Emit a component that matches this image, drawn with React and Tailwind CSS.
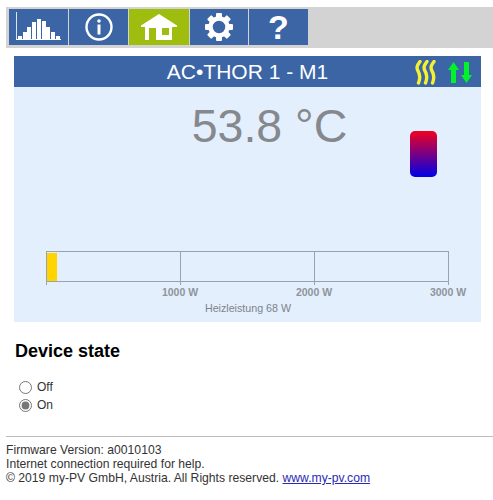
import { useState } from "react";

const font = { fontFamily: '"Liberation Sans", Arial, sans-serif' };

function ChartIcon() {
  const bars = [
    [9, 3], [14, 7], [18, 12], [23, 17], [28, 20],
    [33, 18], [37, 12], [42, 7], [47, 3],
  ];
  return (
    <svg width="59" height="36" viewBox="0 0 59 36">
      <path d="M7.5 3V31" stroke="#dbe6f2" strokeWidth="1" fill="none" />
      <rect x="7" y="30" width="45" height="1" fill="#ffffff" />
      {bars.map(([x, h]) => (
        <rect key={x} x={x} y={30 - h} width="4" height={h} fill="#ffffff" />
      ))}
    </svg>
  );
}

function InfoIcon() {
  return (
    <svg width="30" height="30" viewBox="0 0 30 30">
      <circle cx="15" cy="15" r="12.5" fill="none" stroke="#ffffff" strokeWidth="2.4" />
      <circle cx="15" cy="9" r="1.8" fill="#ffffff" />
      <rect x="13.5" y="12.5" width="3" height="10" fill="#ffffff" />
    </svg>
  );
}

function HomeIcon() {
  return (
    <svg width="36" height="26" viewBox="0 0 36 26">
      <path d="M18 0L36 11.5V13H0V11.5Z" fill="#ffffff" />
      <path fillRule="evenodd" d="M4 12H31V26H4ZM8 14V26H15V14ZM21 14V21H28V14Z" fill="#ffffff" />
    </svg>
  );
}

function GearIcon() {
  const teeth = [0, 45, 90, 135, 180, 225, 270, 315];
  return (
    <svg width="30" height="30" viewBox="0 0 30 30">
      {teeth.map((a) => (
        <rect key={a} x="12" y="1" width="6" height="7" rx="1" fill="#ffffff" transform={`rotate(${a} 15 15)`} />
      ))}
      <circle cx="15" cy="15" r="8.5" fill="none" stroke="#ffffff" strokeWidth="4.5" />
    </svg>
  );
}

function HeatIcon() {
  const d = "M6 1.5C2.5 6 2.5 8 4 11C6.5 15 6.5 18 4.5 23";
  return (
    <svg width="22" height="25" viewBox="0 0 22 25" fill="none" stroke="#f5f032" strokeWidth="3.4" strokeLinecap="round">
      <path d={d} />
      <path d={d} transform="translate(7 0)" />
      <path d={d} transform="translate(14 0)" />
    </svg>
  );
}

function ArrowsIcon() {
  return (
    <svg width="24" height="24" viewBox="0 0 24 24" fill="#00f22a">
      <path d="M5.5 2L11 10H8V23H3V10H0Z" />
      <path d="M18.5 23L24 15H21V2H16V15H13Z" />
    </svg>
  );
}

function PowerGauge({ watts }) {
  const w = Math.round((watts / 3000) * 403) + 1;
  return (
    <svg width="467" height="80" viewBox="0 0 467 80" style={font} className="block">
      <rect x="33" y="12" width={w} height="28" fill="#ffd400" />
      <g stroke="#9aa3ad" strokeWidth="1" fill="none">
        <path d="M32.5 10.5H434.5" />
        <path d="M32.5 40.5H434.5" />
        <path d="M32.5 10V44" />
        <path d="M166.5 10V44" />
        <path d="M300.5 10V44" />
        <path d="M434.5 10V44" />
      </g>
      <g fill="#8e949b" fontSize="10.5" fontWeight="700" textAnchor="middle">
        <text x="166" y="55">1000 W</text>
        <text x="300" y="55">2000 W</text>
        <text x="434" y="55">3000 W</text>
        <text x="234" y="71" fontWeight="400" fontSize="10.7" fill="#7d838a">Heizleistung {watts} W</text>
      </g>
    </svg>
  );
}

export default function App() {
  const [state, setState] = useState("on");
  const tabs = [
    { id: "chart", icon: <ChartIcon />, w: "w-[59px]" },
    { id: "info", icon: <InfoIcon />, w: "w-[59px]" },
    { id: "home", icon: <HomeIcon />, w: "w-[60px]", active: true },
    { id: "settings", icon: <GearIcon />, w: "w-[58px]" },
    { id: "help", icon: <span className="text-[34px] font-bold leading-none text-white">?</span>, w: "w-[59px]" },
  ];

  return (
    <div className="h-[500px] w-[493px] overflow-hidden bg-white text-[#222]" style={font}>
      <div className="pt-[7px] pl-[6px]">
        <nav className="flex h-[41px] items-start gap-px bg-[#d3d3d3] pt-[2px] pl-[3px]">
          {tabs.map((t) => (
            <div
              key={t.id}
              className={`flex h-[36px] items-center justify-center ${t.w} ${t.active ? "bg-[#9fbd0f]" : "bg-[#3b65a5]"}`}
            >
              {t.icon}
            </div>
          ))}
        </nav>
      </div>

      <section className="mx-[14px] mt-[8px] w-[467px] bg-[#e4effd]">
        <header className="relative flex h-[31px] items-center justify-center bg-[#3b65a5] pt-px text-[21px] text-white">
          AC•THOR 1 - M1
          <div className="absolute top-[4px] right-[9px] flex items-start gap-[12px]">
            <HeatIcon />
            <ArrowsIcon />
          </div>
        </header>
        <div className="relative h-[154px] pt-[9px] pl-[44px] text-center text-[46.5px] leading-[60px] text-[#85888c]">
          53.8 °C
          <div className="absolute top-[44px] left-[396px] h-[46px] w-[27px] rounded-[5px] bg-linear-to-b/srgb from-[#f00020] to-[#0000e8]" />
        </div>
        <PowerGauge watts={68} />
        <div className="h-px" />
      </section>

      <section className="mt-[18px] pl-[15px]">
        <h2 className="text-[18px] leading-[22px] font-bold text-black">Device state</h2>
        <div className="mt-[16px] flex flex-col text-[12px] leading-[18px] text-[#333]">
          <label className="flex h-[18px] items-center">
            <input
              type="radio"
              name="state"
              checked={state === "off"}
              onChange={() => setState("off")}
              className="m-0 mr-[5px] ml-[4px] h-[13px] w-[13px] accent-[#777]"
            />
            Off
          </label>
          <label className="flex h-[18px] items-center">
            <input
              type="radio"
              name="state"
              checked={state === "on"}
              onChange={() => setState("on")}
              className="m-0 mr-[5px] ml-[4px] h-[13px] w-[13px] accent-[#777]"
            />
            On
          </label>
        </div>
      </section>

      <footer className="mt-[22px] ml-[6px] border-t border-[#bdbdbd] pt-[6px] text-[12.17px] leading-[14px] text-[#333]">
        <p>Firmware Version: a0010103</p>
        <p>Internet connection required for help.</p>
        <p>
          © 2019 my-PV GmbH, Austria. All Rights reserved.{" "}
          <a href="#" className="text-[#2a2ab5] underline">www.my-pv.com</a>
        </p>
      </footer>
    </div>
  );
}
